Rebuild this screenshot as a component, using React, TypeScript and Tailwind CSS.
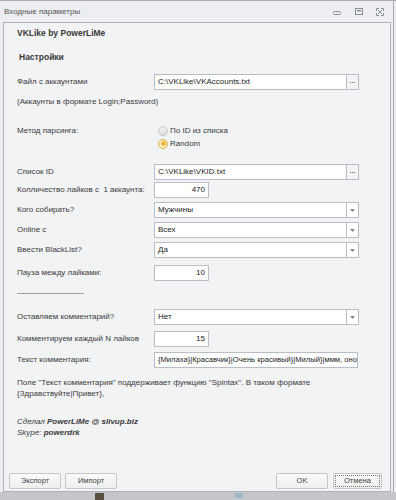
import React from "react";

const font = { fontFamily: '"Liberation Sans", Arial, sans-serif' };

function TextBox({ value, ellipsis, right, w, small }: { value: string; ellipsis?: boolean; right?: boolean; w?: string; small?: boolean }) {
  return (
    <div className={`flex h-[16px] ${w ?? "w-[205px]"}`}>
      <div
        className={`flex-1 h-full bg-white border border-[#b9bec6] flex items-center px-[3px] overflow-hidden whitespace-nowrap ${small ? "text-[7.6px]" : "text-[8px]"} text-[#222] ${
          right ? "justify-end" : ""
        }`}
      >
        {value}
      </div>
      {ellipsis && (
        <div className="w-[12px] h-full border border-l-0 border-[#b9bec6] bg-[#f3f4f6] flex items-center justify-center gap-[1px]">
          <span className="w-[1px] h-[1px] bg-[#666]" />
          <span className="w-[1px] h-[1px] bg-[#666]" />
          <span className="w-[1px] h-[1px] bg-[#666]" />
        </div>
      )}
    </div>
  );
}

function Select({ value }: { value: string }) {
  return (
    <div className="flex h-[16px] w-[205px]">
      <div className="flex-1 h-full bg-white border border-[#b9bec6] flex items-center px-[3px] text-[8px] text-[#222]">
        {value}
      </div>
      <div className="w-[12px] h-full border border-l-0 border-[#b9bec6] bg-white flex items-center justify-center">
        <svg width="5" height="3" viewBox="0 0 5 3">
          <path d="M0 0 H5 L2.5 3 Z" fill="#888" />
        </svg>
      </div>
    </div>
  );
}

function Row({ label, children, mt }: { label: string; children: React.ReactNode; mt: string }) {
  return (
    <div className={`flex items-center h-[16px] ${mt}`}>
      <div className="w-[137px] text-[8px] text-[#3a3a3a] whitespace-pre">{label}</div>
      {children}
    </div>
  );
}

function Button({ label, w, focus }: { label: string; w: string; focus?: boolean }) {
  return (
    <div
      className={`${w} h-[16px] rounded-[2px] border border-[#c3c7cc] bg-gradient-to-b from-[#fbfbfb] to-[#eeeeee] flex items-center justify-center text-[7.5px] text-[#444] p-[1px]`}
    >
      {focus ? (
        <div className="w-full h-full border border-dotted border-[#777] flex items-center justify-center">{label}</div>
      ) : (
        label
      )}
    </div>
  );
}

export default function App() {
  return (
    <div className="w-[396px] h-[500px] bg-[#eceef1] relative overflow-hidden flex flex-col" style={font}>
      <div className="absolute right-[2px] top-0 w-[1px] h-full bg-[#a8adb4]" />
      {/* title bar */}
      <div className="h-[22px] flex items-center pl-[4px] border-t border-[#a9adb3] shrink-0">
        <span className="text-[8px] text-[#555]">Входные параметры</span>
        <div className="ml-auto flex items-center mr-[12px]">
          <svg width="8" height="4" viewBox="0 0 8 4" className="mt-[3px]">
            <rect x="0.5" y="0.5" width="7" height="3" rx="1" fill="none" stroke="#8a8f96" />
          </svg>
          <svg width="8" height="7" viewBox="0 0 8 7" className="ml-[14px]">
            <rect x="0.5" y="0.5" width="7" height="6" fill="none" stroke="#8a8f96" />
            <rect x="2" y="2" width="4" height="1.5" fill="#8a8f96" />
          </svg>
          <svg width="8" height="8" viewBox="0 0 8 8" className="ml-[13px]">
            <path d="M0.5 0.5 H3 M5 0.5 H7.5 V3 M7.5 5 V7.5 H5 M3 7.5 H0.5 V5 M0.5 3 V0.5 M2 2 L6 6 M6 2 L2 6" fill="none" stroke="#8a8f96" />
          </svg>
        </div>
      </div>
      {/* panel */}
      <div className="ml-[3px] w-[388px] h-[470px] border border-[#aeb3ba] bg-[#f2f3f5] flex flex-col pl-[13px] shrink-0">
        <div className="mt-[4px] h-[12px] leading-[12px] text-[8.5px] font-bold text-[#3a3a3a]">VKLike by PowerLiMe</div>
        <div className="mt-[12px] h-[12px] leading-[12px] text-[8.5px] font-bold text-[#3a3a3a] pl-[2px]">Настройки</div>

        <Row label="Файл с аккаунтами" mt="mt-[11px]">
          <TextBox value="C:\VKLike\VKAccounts.txt" ellipsis />
        </Row>
        <div className="mt-[6px] h-[12px] leading-[12px] text-[8px] text-[#3a3a3a]">(Аккаунты в формате Login;Password)</div>

        <div className="mt-[16px] flex h-[26px]">
          <div className="w-[137px] h-[13px] flex items-center text-[8px] text-[#3a3a3a]">Метод парсинга:</div>
          <div className="flex flex-col pl-[4px]">
            <div className="h-[13px] flex items-center text-[8px] text-[#3a3a3a]">
              <span className="w-[10px] h-[10px] rounded-full border border-[#c3c6cb] bg-gradient-to-b from-[#f4f4f4] to-[#dcdcdc] mr-[2px]" />
              По ID из списка
            </div>
            <div className="h-[13px] flex items-center text-[8px] text-[#3a3a3a]">
              <span className="w-[10px] h-[10px] rounded-full border border-[#d9a83a] bg-[#fff6d8] mr-[2px] flex items-center justify-center">
                <span className="w-[5px] h-[5px] rounded-full bg-[#f0b73a]" />
              </span>
              Random
            </div>
          </div>
        </div>

        <Row label="Список ID" mt="mt-[14px]">
          <TextBox value="C:\VKLike\VKID.txt" ellipsis />
        </Row>
        <Row label="Колличество лайков с  1 аккаунта:" mt="mt-[2px]">
          <TextBox value="470" right w="w-[55px]" />
        </Row>
        <Row label="Кого собирать?" mt="mt-[4px]">
          <Select value="Мужчины" />
        </Row>
        <Row label="Online с" mt="mt-[4px]">
          <Select value="Всех" />
        </Row>
        <Row label="Ввести BlackList?" mt="mt-[4px]">
          <Select value="Да" />
        </Row>
        <Row label="Пауза между лайками:" mt="mt-[7px]">
          <TextBox value="10" right w="w-[55px]" />
        </Row>
        <div className="mt-[6px] h-[12px] leading-[12px] text-[8px] text-[#3a3a3a]">-------------------------</div>
        <Row label="Оставляем комментарий?" mt="mt-[10px]">
          <Select value="Нет" />
        </Row>
        <Row label="Комментируем каждый N лайков" mt="mt-[6px]">
          <TextBox value="15" right w="w-[55px]" />
        </Row>
        <Row label="Текст комментария:" mt="mt-[5px]">
          <TextBox value="{Милаха}|Красавчик}|Очень красивый}|Милый}|ммм, оно" w="w-[204px]" small />
        </Row>
        <div className="mt-[9px] text-[8px] leading-[11px] text-[#3a3a3a]">
          <div>Поле "Текст комментария" поддерживает функцию "Spintax". В таком формате</div>
          <div>{"{Здравствуйте|Привет},"}</div>
        </div>
        <div className="mt-[17px] text-[8px] leading-[11px] text-[#3a3a3a] italic">
          <div>
            Сделал <b>PowerLiMe</b> <b>@</b> <b>slivup.biz</b>
          </div>
          <div>
            Skype: <b>powerdrk</b>
          </div>
        </div>

        <div className="mt-auto mb-[2px] flex items-center -ml-[8px] pr-[8px]">
          <Button label="Экспорт" w="w-[52px]" />
          <div className="ml-[4px]">
            <Button label="Импорт" w="w-[52px]" />
          </div>
          <div className="ml-auto">
            <Button label="OK" w="w-[52px]" />
          </div>
          <div className="ml-[5px]">
            <Button label="Отмена" w="w-[49px]" focus />
          </div>
        </div>
      </div>
      <div className="flex-1 bg-[#c4c6c9] relative">
        <div className="absolute left-[95px] top-[1px] w-[9px] h-[7px] bg-[#5a5040]" />
        <div className="absolute left-[235px] top-[1px] w-[8px] h-[5px] bg-[#9fb8c8]" />
      </div>
    </div>
  );
}
